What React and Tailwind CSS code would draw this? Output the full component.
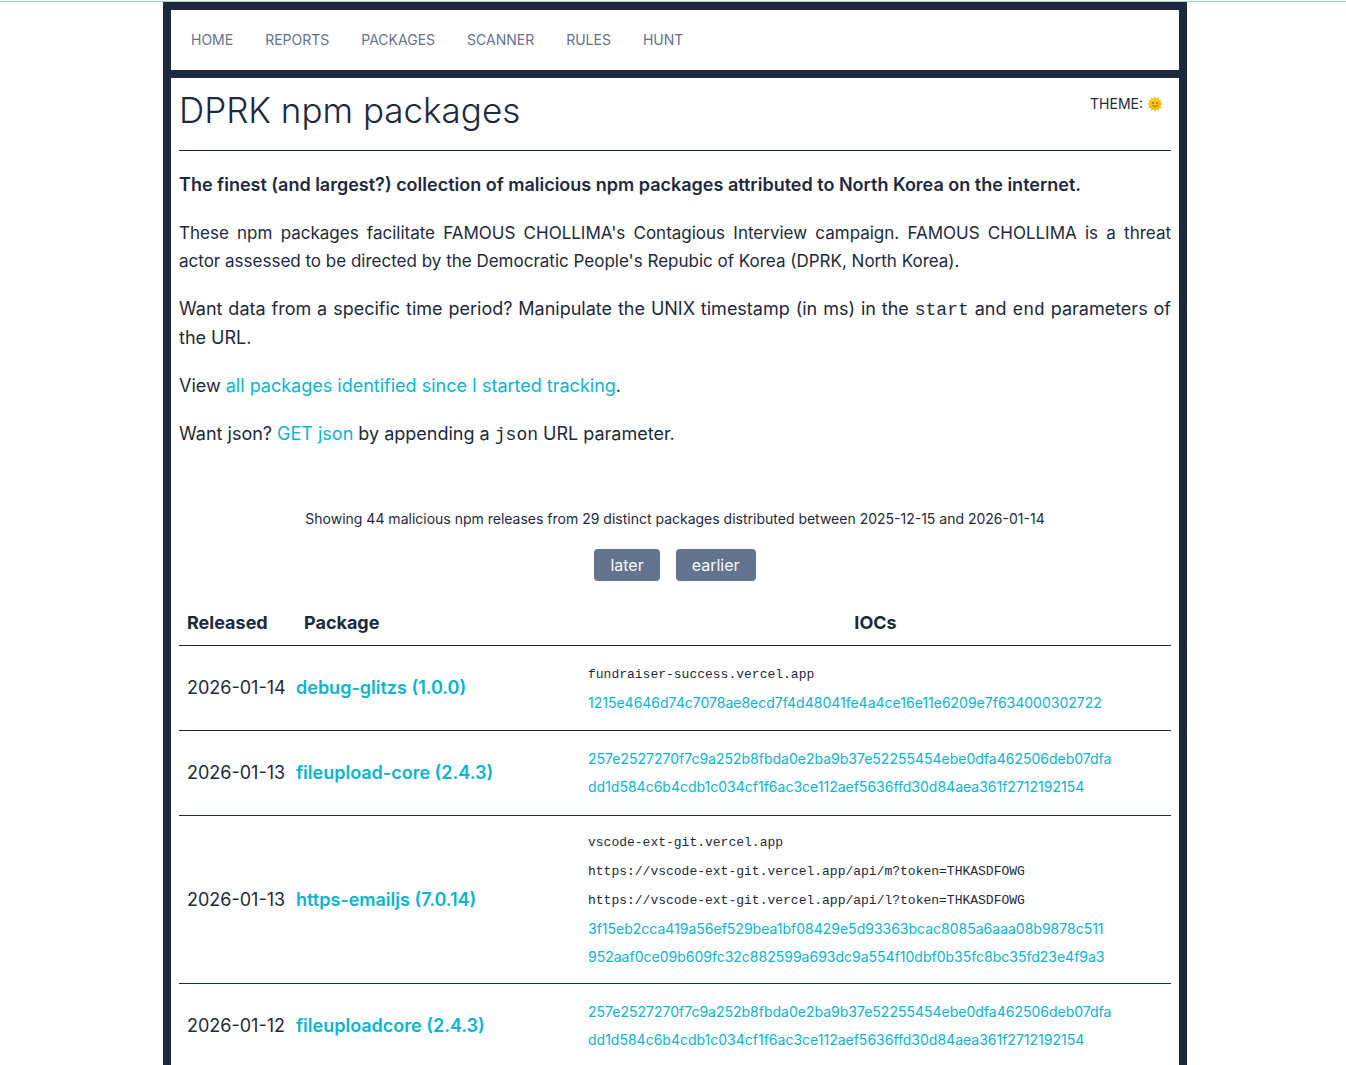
import React, { useState } from "react";
import { clsx } from "clsx";

const navLinks = ["Home", "Reports", "Packages", "Scanner", "Rules", "Hunt"];

const releases = [
  {
    date: "2026-01-14",
    name: "debug-glitzs",
    version: "1.0.0",
    hosts: ["fundraiser-success.vercel.app"],
    hashes: ["1215e4646d74c7078ae8ecd7f4d48041fe4a4ce16e11e6209e7f634000302722"],
  },
  {
    date: "2026-01-13",
    name: "fileupload-core",
    version: "2.4.3",
    hosts: [],
    hashes: [
      "257e2527270f7c9a252b8fbda0e2ba9b37e52255454ebe0dfa462506deb07dfa",
      "dd1d584c6b4cdb1c034cf1f6ac3ce112aef5636ffd30d84aea361f2712192154",
    ],
  },
  {
    date: "2026-01-13",
    name: "https-emailjs",
    version: "7.0.14",
    hosts: [
      "vscode-ext-git.vercel.app",
      "https://vscode-ext-git.vercel.app/api/m?token=THKASDFOWG",
      "https://vscode-ext-git.vercel.app/api/l?token=THKASDFOWG",
    ],
    hashes: [
      "3f15eb2cca419a56ef529bea1bf08429e5d93363bcac8085a6aaa08b9878c511",
      "952aaf0ce09b609fc32c882599a693dc9a554f10dbf0b35fc8bc35fd23e4f9a3",
    ],
  },
  {
    date: "2026-01-12",
    name: "fileuploadcore",
    version: "2.4.3",
    hosts: [],
    hashes: [
      "257e2527270f7c9a252b8fbda0e2ba9b37e52255454ebe0dfa462506deb07dfa",
      "dd1d584c6b4cdb1c034cf1f6ac3ce112aef5636ffd30d84aea361f2712192154",
    ],
  },
];

function SunIcon() {
  return (
    <svg viewBox="0 0 32 32" className="h-4 w-4" aria-hidden="true">
      <g fill="#fdc40f">
        {[0, 30, 60, 90, 120, 150, 180, 210, 240, 270, 300, 330].map((angle) => (
          <path key={angle} d="M16 0.5 L20.5 8 L11.5 8 Z" transform={`rotate(${angle} 16 16)`} />
        ))}
      </g>
      <circle cx="16" cy="16" r="11" fill="#fcb60c" />
      <circle cx="15" cy="13" r="8" fill="#fdc81e" />
      <ellipse cx="12" cy="14" rx="1.4" ry="2" fill="#6b4a1b" />
      <ellipse cx="20" cy="14" rx="1.4" ry="2" fill="#6b4a1b" />
      <path d="M11.5 19.5 Q16 23 20.5 19.5" fill="none" stroke="#7a4a12" strokeWidth="1.6" strokeLinecap="round" />
    </svg>
  );
}

function Code({ children }) {
  return <code className="font-['Liberation_Mono',monospace] text-lg">{children}</code>;
}

function TextLink({ children }) {
  return <a href="#" className="text-[#06b6d4] hover:underline">{children}</a>;
}

function PageButton({ children }) {
  return (
    <button type="button" className="h-8 rounded bg-slate-500 px-4 text-base text-slate-50 hover:bg-slate-600">
      {children}
    </button>
  );
}

export default function App() {
  const [dark, setDark] = useState(false);

  return (
    <div className={clsx("min-h-screen font-['Inter',sans-serif] text-slate-800", dark ? "bg-slate-300" : "bg-white")}>
      <div className="h-0.5 border-b border-[#abd3c5] bg-[#f0fbf7]" />

      <div className="pl-1">
        <div className="mx-auto max-w-5xl border-8 border-slate-800">
          <nav className="flex h-[68px] items-center gap-8 border-b-8 border-slate-800 px-5">
            {navLinks.map((link) => (
              <a key={link} href="#" className="text-sm uppercase text-slate-500 hover:text-slate-800">
                {link}
              </a>
            ))}
          </nav>

          <main className="px-2 pb-4">
            <header className="flex items-start justify-between border-b border-slate-800 pt-3 pb-5">
              <h1 className="text-[35px] leading-10 font-light">DPRK npm packages</h1>
              <button
                type="button"
                onClick={() => setDark(!dark)}
                className="mr-2 flex h-7 items-center gap-1 text-sm"
              >
                THEME: <SunIcon />
              </button>
            </header>

            <div className="mt-5 space-y-5 text-justify text-lg leading-7">
              <p className="font-semibold">
                The finest (and largest?) collection of malicious npm packages attributed to North Korea on the internet.
              </p>
              <p className="text-[17px]">
                These npm packages facilitate FAMOUS CHOLLIMA's Contagious Interview campaign. FAMOUS CHOLLIMA is a
                threat actor assessed to be directed by the Democratic People's Repubic of Korea (DPRK, North Korea).
              </p>
              <p>
                Want data from a specific time period? Manipulate the UNIX timestamp (in ms) in the <Code>start</Code>{" "}
                and <Code>end</Code> parameters of the URL.
              </p>
              <p>
                View <TextLink>all packages identified since I started tracking</TextLink>.
              </p>
              <p>
                Want json? <TextLink>GET json</TextLink> by appending a <Code>json</Code> URL parameter.
              </p>
            </div>

            <p className="mt-15 text-center text-sm">
              Showing 44 malicious npm releases from 29 distinct packages distributed between 2025-12-15 and 2026-01-14
            </p>
            <div className="mt-5 flex justify-center gap-4">
              <PageButton>later</PageButton>
              <PageButton>earlier</PageButton>
            </div>

            <table className="mt-4 w-full table-fixed border-collapse text-lg">
              <colgroup>
                <col className="w-[117px]" />
                <col className="w-[284px]" />
                <col />
              </colgroup>
              <thead>
                <tr className="border-b border-slate-800">
                  <th className="px-2 pt-3 pb-2 text-left font-bold">Released</th>
                  <th className="px-2 pt-3 pb-2 text-left font-bold">Package</th>
                  <th className="px-2 pt-3 pb-2 text-center font-bold">IOCs</th>
                </tr>
              </thead>
              <tbody>
                {releases.map((release) => (
                  <tr key={release.name} className="h-[85px] border-b border-slate-800">
                    <td className="pl-2 whitespace-nowrap">{release.date}</td>
                    <td className="font-semibold">
                      <TextLink>
                        {release.name} ({release.version})
                      </TextLink>
                    </td>
                    <td className="px-2 py-3">
                      {release.hosts.map((host) => (
                        <code key={host} className="block font-['Liberation_Mono',monospace] text-[13px] leading-[29px]">
                          {host}
                        </code>
                      ))}
                      {release.hashes.map((hash) => (
                        <a key={hash} href="#" className="block text-sm leading-7 text-[#06b6d4] hover:underline">
                          {hash}
                        </a>
                      ))}
                    </td>
                  </tr>
                ))}
              </tbody>
            </table>
          </main>
        </div>
      </div>
    </div>
  );
}
